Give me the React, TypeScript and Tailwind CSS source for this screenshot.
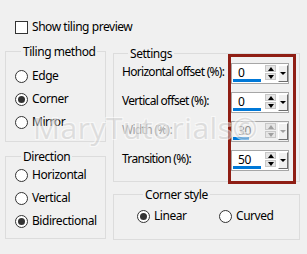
import React from "react";

const font = { fontFamily: '"Noto Sans", "Open Sans", sans-serif', letterSpacing: "-0.45px" };

function Radio({ label, checked = false }: { label: string; checked?: boolean }) {
  return (
    <div className="flex items-center h-[16px] gap-[4px]">
      <span className="w-[13px] h-[13px] rounded-full border border-[#333333] bg-white flex items-center justify-center shrink-0">
        {checked && <span className="w-[7px] h-[7px] rounded-full bg-[#333333]" />}
      </span>
      <span className="text-[12px] leading-[16px] text-black whitespace-nowrap">{label}</span>
    </div>
  );
}

function Spinner({ value, bar, disabled = false }: { value: string; bar: number; disabled?: boolean }) {
  const tri = disabled ? "border-t-[#a0a0a0]" : "border-t-black";
  const triUp = disabled ? "border-b-[#a0a0a0]" : "border-b-black";
  return (
    <div
      className={`relative shrink-0 w-[58px] h-[21px] border border-[#a6a6a6] ${disabled ? "bg-[#f0f0f0]" : "bg-white"}`}
    >
      <span
        className={`absolute left-[6px] top-[1px] text-[12px] leading-[16px] ${disabled ? "text-[#8a8a8a]" : "text-black"}`}
      >
        {value}
      </span>
      <div className="absolute left-[1px] bottom-[1px] h-[3px] bg-[#0078d7]" style={{ width: bar }} />
      {/* up/down arrows */}
      <div className="absolute left-[33px] top-[1px] w-[11px] h-[15px] flex flex-col gap-[1px]">
        <div className="h-[7px] bg-[#e5e5e5] border border-[#c8c8c8] flex items-center justify-center">
          <span className={`w-0 h-0 border-l-[3px] border-r-[3px] border-b-[4px] border-l-transparent border-r-transparent ${triUp}`} />
        </div>
        <div className="h-[7px] bg-[#e5e5e5] border border-[#c8c8c8] flex items-center justify-center">
          <span className={`w-0 h-0 border-l-[3px] border-r-[3px] border-t-[4px] border-l-transparent border-r-transparent ${tri}`} />
        </div>
      </div>
      {/* dropdown button */}
      <div className="absolute left-[46px] top-[1px] w-[10px] h-[17px] bg-[#f0f0f0] border-t border-l border-t-white border-l-white border-r border-b border-r-[#6d6d6d] border-b-[#6d6d6d] flex items-center justify-center">
        <span className={`w-0 h-0 border-l-[3px] border-r-[3px] border-t-[3px] border-l-transparent border-r-transparent ${tri}`} />
      </div>
    </div>
  );
}

function Group({ title, className, children }: { title: string; className: string; children: React.ReactNode }) {
  return (
    <fieldset className={`border border-[#dcdcdc] ${className}`}>
      <legend className="ml-[6px] px-[2px] text-[12px] leading-[16px] text-black translate-y-[1px]">{title}</legend>
      {children}
    </fieldset>
  );
}

export default function App() {
  const rows = [
    { label: "Horizontal offset (%):", value: "0", bar: 28 },
    { label: "Vertical offset (%):", value: "0", bar: 28 },
    { label: "Width (%):", value: "30", bar: 16, disabled: true },
    { label: "Transition (%):", value: "50", bar: 28 },
  ];
  return (
    <div className="relative w-[307px] h-[254px] bg-[#f0f0f0] overflow-hidden" style={font}>
      <div className="pt-[19px] pl-[15px] flex items-center h-[35px] gap-[4px]">
        <span className="w-[13px] h-[13px] border border-[#333333] bg-white" />
        <span className="text-[12px] leading-[16px] text-black">Show tiling preview</span>
      </div>

      <div className="flex mt-[8px] pl-[5px] gap-[7px]">
        <div className="flex flex-col gap-[6px] w-[101px]">
          <Group title="Tiling method" className="h-[99px] pl-[9px] pt-[9px]">
            <div className="flex flex-col gap-[7px]">
              <Radio label="Edge" />
              <Radio label="Corner" checked />
              <Radio label="Mirror" />
            </div>
          </Group>
          <Group title="Direction" className="h-[91px] pl-[9px] pt-[3px]">
            <div className="flex flex-col gap-[7px]">
              <Radio label="Horizontal" />
              <Radio label="Vertical" />
              <Radio label="Bidirectional" checked />
            </div>
          </Group>
        </div>

        <div className="flex flex-col gap-[4px] w-[187px] mt-[2px]">
          <Group title="Settings" className="h-[137px] pl-[8px] pr-[10px] pt-[2px]">
            <div className="flex flex-col gap-[8px]">
              {rows.map((r) => (
                <div key={r.label} className="flex items-center">
                  <span
                    className={`flex-1 text-[12px] leading-[16px] -mt-[3px] whitespace-nowrap tracking-[-0.7px] ${r.disabled ? "text-[#a0a0a0]" : "text-black"}`}
                  >
                    {r.label}
                  </span>
                  <Spinner value={r.value} bar={r.bar} disabled={r.disabled} />
                </div>
              ))}
            </div>
          </Group>
          <Group title="Corner style" className="h-[54px] pl-[23px] pt-[6px]">
            <div className="flex">
              <div className="w-[82px]">
                <Radio label="Linear" checked />
              </div>
              <Radio label="Curved" />
            </div>
          </Group>
        </div>
      </div>

      {/* highlight frame */}
      <div className="absolute left-[228px] top-[54px] w-[68px] h-[130px] border-[3px] border-[#8f1e14]" />

      {/* watermark */}
      <div
        className="absolute left-[33px] top-[110px] text-[30px] leading-[36px] text-[#cfcfcf] pointer-events-none"
        style={{
          fontFamily: '"Open Sans", "Noto Sans", sans-serif',
          letterSpacing: "0.5px",
          textShadow: "1px 1px 0 #ffffff, -1px -1px 0 #ffffff, 1px -1px 0 #ffffff, -1px 1px 0 #ffffff",
          opacity: 0.55,
        }}
      >
        MaryTutorials©
      </div>
    </div>
  );
}
